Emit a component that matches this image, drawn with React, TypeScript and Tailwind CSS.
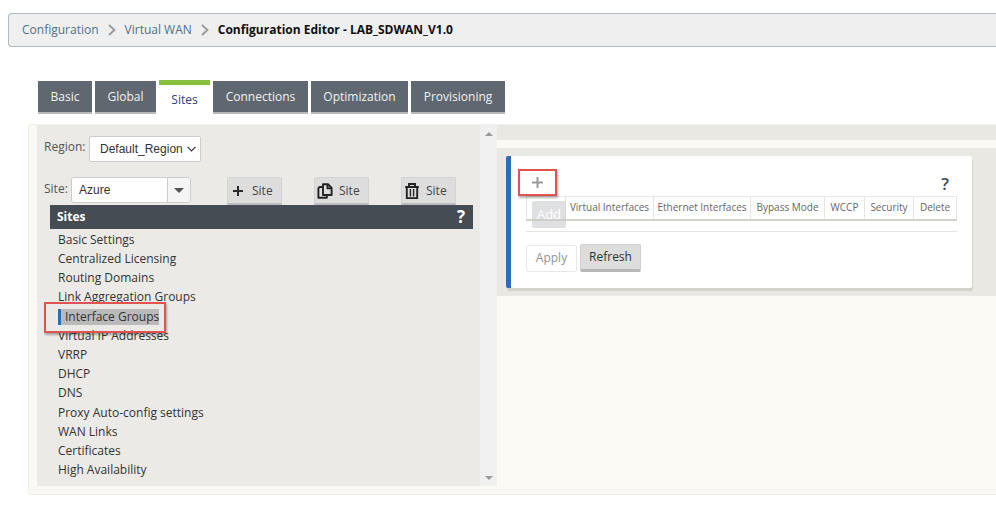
import type { ReactNode } from "react";

const tabs = [
  { label: "Basic", width: "w-[54px]" },
  { label: "Global", width: "w-[61px]" },
  { label: "Sites", width: "w-[51px]" },
  { label: "Connections", width: "w-[95px]" },
  { label: "Optimization", width: "w-[97px]" },
  { label: "Provisioning", width: "w-[94px]" },
];

const sections = [
  "Basic Settings",
  "Centralized Licensing",
  "Routing Domains",
  "Link Aggregation Groups",
  "Interface Groups",
  "Virtual IP Addresses",
  "VRRP",
  "DHCP",
  "DNS",
  "Proxy Auto-config settings",
  "WAN Links",
  "Certificates",
  "High Availability",
];

const columns = [
  { label: "Virtual Interfaces", width: "w-[88px]" },
  { label: "Ethernet Interfaces", width: "w-[97px]" },
  { label: "Bypass Mode", width: "w-[74px]" },
  { label: "WCCP", width: "w-[40px]" },
  { label: "Security", width: "w-[49px]" },
  { label: "Delete", width: "w-[43px]" },
];

function Separator() {
  return (
    <svg className="mx-[9px] h-3 w-[8px]" viewBox="0 0 8 12" fill="none" stroke="#989898" strokeWidth="1.8" aria-hidden="true">
      <path d="M1 1l5.5 5L1 11" />
    </svg>
  );
}

function PlusIcon() {
  return (
    <svg className="size-4" viewBox="0 0 16 16" stroke="#2b2b2b" strokeWidth="2" aria-hidden="true">
      <path d="M8 3v10M3 8h10" />
    </svg>
  );
}

function CopyIcon() {
  return (
    <svg className="size-4" viewBox="0 0 16 16" fill="none" stroke="#222" strokeWidth="1.9" strokeLinejoin="round" aria-hidden="true">
      <path d="M6 1.2h5L14.6 5v7H6z" />
      <path d="M10.5 1.2V5.4h4" />
      <path d="M5.5 4H2.6L1.4 5.2v9.6h8.4v-2.4" />
    </svg>
  );
}

function TrashIcon() {
  return (
    <svg className="size-4" viewBox="0 0 16 16" fill="none" stroke="#222" strokeWidth="1.9" aria-hidden="true">
      <path d="M1.2 4h13.6M5 3.5V1h6v2.5M2.8 4.5v10.6h10.4V4.5" />
      <path d="M6.4 6v7.5M9.6 6v7.5" strokeWidth="1.4" />
    </svg>
  );
}

function SiteButton({ action, children }: { action: string; children: ReactNode }) {
  return (
    <button
      type="button"
      aria-label={`${action} Site`}
      className="flex h-7 w-[55px] items-center gap-[6px] rounded-t-xs border border-b-2 border-[#d2d2d2] border-b-[#bcbcc0] bg-[#dddddd] pl-[2px] text-[12px] text-[#444]"
    >
      {children}
      <span>Site</span>
    </button>
  );
}

export default function App() {
  return (
    <div className="min-h-screen bg-white pt-[13px] font-['Open_Sans','Noto_Sans',sans-serif] text-[12px] text-[#333]">
      <nav aria-label="Breadcrumb" className="ml-2 flex h-[34px] items-center rounded-l-[4px] border border-r-0 border-[#b0bac2] bg-[#efefef] pl-[13px]">
        <a href="#configuration" className="text-[#4d7288]">Configuration</a>
        <Separator />
        <a href="#wan" className="text-[#4d7288]">Virtual WAN</a>
        <Separator />
        <span aria-current="page" className="font-bold text-[#111]">Configuration Editor - LAB_SDWAN_V1.0</span>
      </nav>

      <div role="tablist" className="mt-[33px] ml-[38px] flex gap-[3px]">
        {tabs.map((tab) =>
          tab.label === "Sites" ? (
            <button key={tab.label} type="button" role="tab" aria-selected="true" className={`${tab.width} h-[34px] border-t-[5px] border-[#87c03f] bg-white text-[#2c3d7c]`}>
              {tab.label}
            </button>
          ) : (
            <button key={tab.label} type="button" role="tab" aria-selected="false" className={`${tab.width} mt-px h-[33px] border-b-2 border-[#b9b9b9] bg-[#5f6770] text-[#f2f2f2]`}>
              {tab.label}
            </button>
          ),
        )}
      </div>

      <div className="mt-[10px] ml-7 flex rounded-l-[3px] border border-r-0 border-[#f1f1eb] bg-[#faf9f4] pb-2 pl-2">
        <aside className="flex w-[460px] shrink-0 bg-[#ebeae6]">
          <div className="min-w-0 flex-1 pb-[6px]">
            <div className="flex pt-[11px] pl-[7px]">
              <label htmlFor="region" className="w-[45px] pt-[2px] text-[#555]">Region:</label>
              <div className="grid w-[112px] items-center">
                <select id="region" className="col-start-1 row-start-1 h-[26px] appearance-none rounded-[2px] border border-[#ccc] bg-white pl-[10px] font-['Liberation_Sans',Arial,sans-serif] text-[12px] text-[#333]">
                  <option>Default_Region</option>
                </select>
                <svg className="pointer-events-none col-start-1 row-start-1 mr-[5px] h-[6px] w-[9px] justify-self-end" viewBox="0 0 9 6" fill="none" stroke="#333" strokeWidth="1.2" aria-hidden="true">
                  <path d="M.5.8l4 4 4-4" />
                </svg>
              </div>
            </div>
            <div className="mt-[15px] flex pl-[7px]">
              <label htmlFor="site" className="w-[27px] pt-[3px] text-[#555]">Site:</label>
              <div className="flex h-[26px] w-[120px] overflow-hidden rounded-[3px] border border-[#ccc]">
                <input id="site" defaultValue="Azure" className="min-w-0 flex-1 bg-white pl-[7px] font-['Liberation_Sans',Arial,sans-serif] text-[12px] text-[#333]" />
                <button type="button" aria-label="Show sites" className="flex w-[23px] items-center justify-center border-l border-[#ccc] bg-[#f5f5f5]">
                  <svg className="h-[5px] w-[10px]" viewBox="0 0 10 5" fill="#555" aria-hidden="true"><path d="M0 0h10L5 5z" /></svg>
                </button>
              </div>
              <div className="ml-9 flex gap-8">
                <SiteButton action="Add"><PlusIcon /></SiteButton>
                <SiteButton action="Clone"><CopyIcon /></SiteButton>
                <SiteButton action="Delete"><TrashIcon /></SiteButton>
              </div>
            </div>
            <div className="mr-[7px] ml-[13px] flex h-6 items-center justify-between bg-[#454c54] pr-2 pl-[7px] font-bold text-white">
              <h2>Sites</h2>
              <button type="button" aria-label="Help with sites" className="text-[17px] leading-6">?</button>
            </div>
            <ul className="ml-[21px] grid h-[251px] pt-px">
              {sections.map((section) =>
                section === "Interface Groups" ? (
                  <li key={section} className="relative flex items-center">
                    <a href="#interface-groups" aria-current="true" className="border-l-[3px] border-[#2c6cb5] bg-[#bababa] pl-1 leading-4">{section}</a>
                    <span className="pointer-events-none absolute top-[-5px] left-[-14px] h-[31px] w-[122px] border-2 border-[#e15350] shadow-[1px_2px_2px_rgba(0,0,0,0.3)]" />
                  </li>
                ) : (
                  <li key={section} className="flex items-center">
                    <a href="#section" className="leading-4">{section}</a>
                  </li>
                ),
              )}
            </ul>
          </div>
          <div aria-hidden="true" className="flex w-[17px] flex-col items-center justify-between bg-[#f0f0f0] pt-[7px] pb-[6px]">
            <svg className="h-1 w-2" viewBox="0 0 8 4" fill="#999"><path d="M0 4h8L4 0z" /></svg>
            <svg className="h-1 w-2" viewBox="0 0 8 4" fill="#999"><path d="M0 0h8L4 4z" /></svg>
          </div>
        </aside>

        <main className="min-w-0 flex-1">
          <div className="h-[15px] bg-[#e9e8e2]" />
          <div className="mt-2 bg-[#e9e8e2] pt-2 pr-6 pb-2 pl-[9px]">
            <section className="rounded-[2px] border-l-[5px] border-[#2c6cb5] bg-white px-[15px] pt-[13px] pb-4 shadow-[1px_3px_1px_#d4d2c9]">
              <div className="flex h-[27px] items-center justify-between">
                <div className="relative -ml-2">
                  <button type="button" aria-label="Add interface group" className="flex h-[27px] w-[39px] items-center justify-center border-2 border-[#e15350] shadow-[1px_2px_2px_rgba(0,0,0,0.3)]">
                    <svg className="size-[11px]" viewBox="0 0 11 11" stroke="#999" strokeWidth="2" aria-hidden="true"><path d="M5.5 0v11M0 5.5h11" /></svg>
                  </button>
                  <span role="tooltip" className="absolute top-8 left-[14px] h-[27px] w-[34px] rounded-[2px] bg-[#c9cbcd]/60 text-center text-[13px] leading-[27px] text-white">Add</span>
                </div>
                <button type="button" aria-label="Help with interface groups" className="mr-2 pt-[3px] text-[17px] font-semibold leading-6 text-[#454c54]">?</button>
              </div>
              <table className="w-full table-fixed border-collapse text-[10px] text-[#666]">
                <thead>
                  <tr className="h-[23px] border border-b-2 border-[#e6e5e2] border-b-[#d3d1c9]">
                    <td />
                    {columns.map((column) => (
                      <th key={column.label} scope="col" className={`${column.width} border-l border-[#e6e5e2] p-0 font-normal whitespace-nowrap`}>{column.label}</th>
                    ))}
                  </tr>
                </thead>
              </table>
              <div className="mt-[10px] flex gap-[3px] border-t border-[#e6e6e4] pt-3">
                <button type="button" disabled className="mt-px h-[27px] w-[51px] rounded-[2px] border border-[#e8e8e8] text-[12px] text-[#929292]">Apply</button>
                <button type="button" className="h-7 w-[61px] rounded-[2px] border border-b-[3px] border-[#cfcfcf] border-b-[#b8b8b8] bg-[#dddddd] text-[12px] text-[#333]">Refresh</button>
              </div>
            </section>
          </div>
        </main>
      </div>
    </div>
  );
}
